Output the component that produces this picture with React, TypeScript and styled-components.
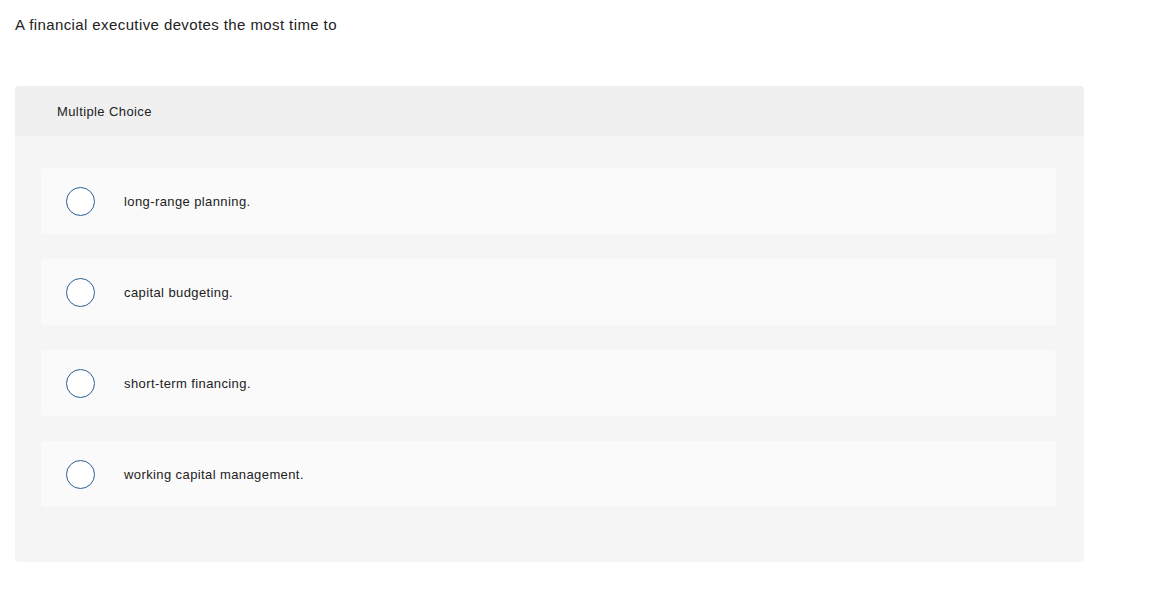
import React from 'react'
import styled, { createGlobalStyle } from 'styled-components'

const options = [
  'long-range planning.',
  'capital budgeting.',
  'short-term financing.',
  'working capital management.',
]

const GlobalStyle = createGlobalStyle`
  body {
    margin: 0;
    background: #ffffff;
    font-family: "Liberation Sans", Arial, sans-serif;
    letter-spacing: 0.4px;
    color: #222222;
  }
`

const App: React.FC = () => {
  return (
    <Page>
      <GlobalStyle />
      <Question>A financial executive devotes the most time to</Question>
      <Card>
        <CardHeader>Multiple Choice</CardHeader>
        <CardBody>
          {options.map((text) => (
            <Option key={text}>
              <Radio />
              <OptionText>{text}</OptionText>
            </Option>
          ))}
        </CardBody>
      </Card>
    </Page>
  )
}

/* Styles */
const Page = styled.div`
  padding: 16px 67px 0 15px;
  width: 1069px;
`

const Question = styled.p`
  margin: 0;
  font-size: 15px;
  line-height: 18px;
  color: #222222;
`

const Card = styled.div`
  margin-top: 52px;
  border-radius: 4px;
  overflow: hidden;
  background-color: #f5f5f5;
`

const CardHeader = styled.div`
  height: 50px;
  display: flex;
  align-items: center;
  padding-left: 42px;
  background-color: #f0f0f0;
  font-size: 13px;
  color: #222222;
`

const CardBody = styled.div`
  display: flex;
  flex-direction: column;
  gap: 25px;
  padding: 32px 28px 55px 26px;
`

const Option = styled.div`
  height: 66px;
  display: flex;
  align-items: center;
  padding-left: 25px;
  border-radius: 3px;
  background-color: #fafafa;
`

const Radio = styled.span`
  box-sizing: border-box;
  width: 29px;
  height: 29px;
  border-radius: 50%;
  border: 1.5px solid #2a5f95;
  background-color: #ffffff;
  flex-shrink: 0;
`

const OptionText = styled.span`
  margin-left: 29px;
  font-size: 13px;
  color: #222222;
`

export default App
